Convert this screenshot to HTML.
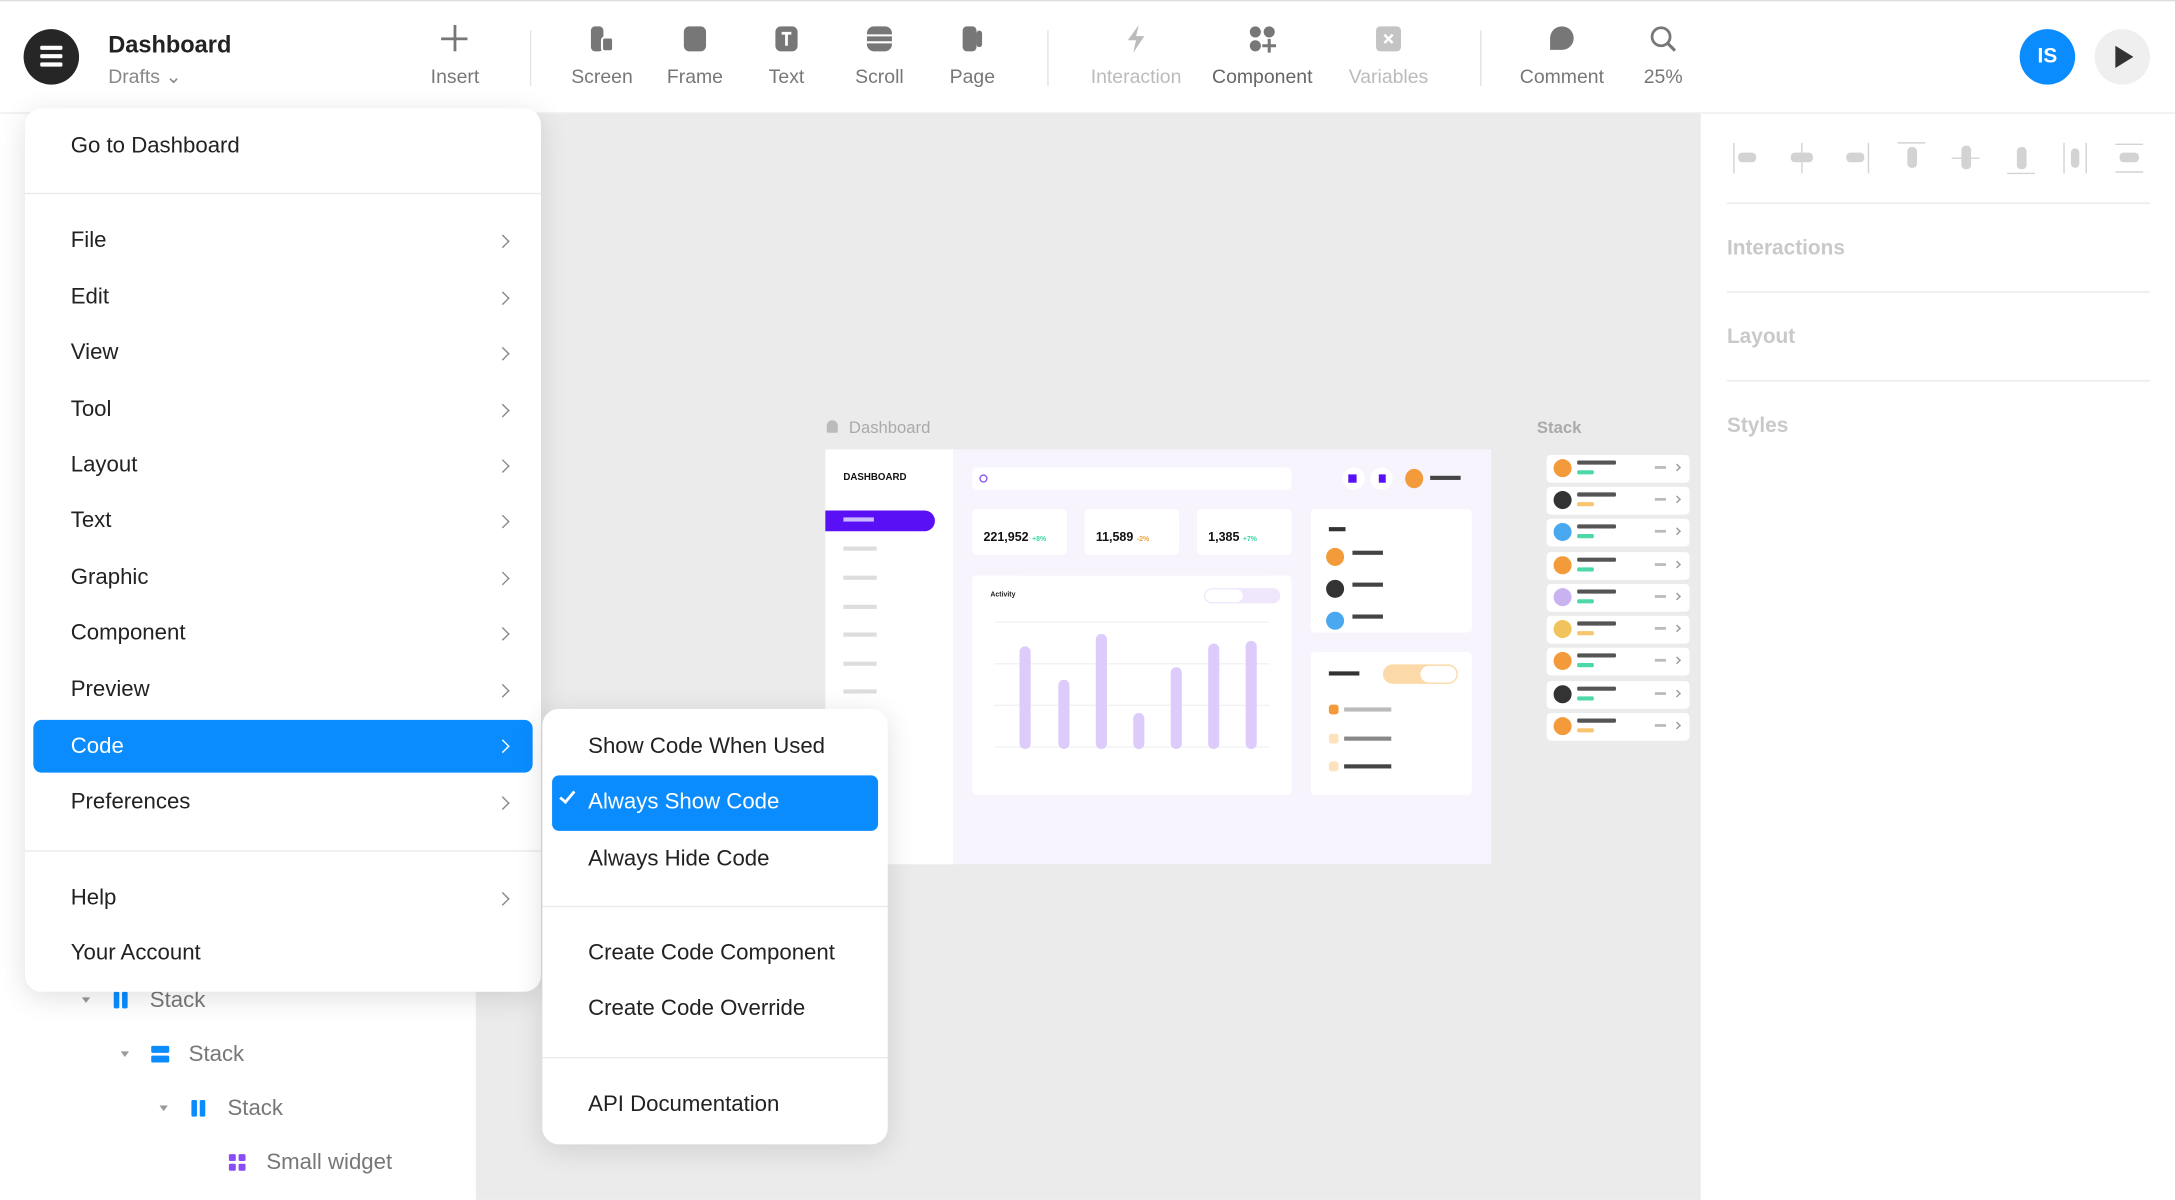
<!DOCTYPE html>
<html><head><meta charset="utf-8"><style>
*{box-sizing:border-box;margin:0;padding:0}
html,body{width:2175px;height:1200px;overflow:hidden;background:#fff;font-family:"Liberation Sans",sans-serif}
#r{position:absolute;left:0;top:0;width:1568px;height:865px;transform:scale(1.38712);transform-origin:0 0;background:#fff}
.a{position:absolute}
.tb{font-size:14px;color:#777;text-align:center;width:100px;margin-left:-50px;top:47px}
.ic{position:absolute;top:18px;width:20px;height:20px;margin-left:-10px}
.mi{position:absolute;left:51px;font-size:16px;color:#222;transform:translateY(-45%)}
.ch{position:absolute;left:359px;width:7px;height:7px;border-right:1.6px solid #888;border-top:1.6px solid #888;transform:translateY(-50%) rotate(45deg)}
.si{position:absolute;left:424px;font-size:16px;color:#222;transform:translateY(-45%)}
.sep{position:absolute;height:1px;background:#eaeaea}
.lt{position:absolute;font-size:16px;color:#777;transform:translateY(-45%)}
.tri{position:absolute;width:0;height:0;border-left:3.5px solid transparent;border-right:3.5px solid transparent;border-top:4px solid #999;transform:translateY(-50%)}
.card{position:absolute;background:#fff;border-radius:3px}
.bar{position:absolute;width:8px;background:#dccbfb;border-radius:4px}
.sc{position:absolute;left:1115px;width:103px;height:20px;background:#fff;border-radius:3px}
.sc i{position:absolute;left:5px;top:3px;width:13px;height:13px;border-radius:50%}
.sc b{position:absolute;left:22px;top:4px;width:28px;height:3px;background:#555;border-radius:1px}
.sc u{position:absolute;left:22px;top:11px;width:12px;height:3px;border-radius:1px}
.sc s{position:absolute;left:78px;top:8px;width:8px;height:2px;background:#bbb}
.sc em{position:absolute;left:92px;top:7px;width:4px;height:4px;border-right:1px solid #999;border-top:1px solid #999;transform:rotate(45deg)}
.rl{position:absolute;left:1245px;font-size:15px;font-weight:bold;color:#c9c9c9;transform:translateY(-45%)}
.al{position:absolute;top:100px;width:26px;height:28px;margin-left:-13px}
</style></head><body><div id="r">
<div class="a" style="left:343px;top:82px;width:882px;height:783px;background:#ebebeb"></div>
<div class="a" style="left:1225px;top:82px;width:343px;height:783px;background:#fff;border-left:1px solid #e6e6e6"></div>
<div class="a" style="left:0;top:0;width:1568px;height:1px;background:#ddd"></div>
<div class="a" style="left:0;top:81px;width:1568px;height:1px;background:#ececec"></div>
<div class="a" style="left:17px;top:21px;width:40px;height:40px;border-radius:50%;background:#262626"></div>
<div class="a" style="left:29px;top:33px;width:16px;height:2.5px;background:#fff;border-radius:1px;box-shadow:0 6px 0 #fff,0 12px 0 #fff"></div>
<div class="a" style="left:78px;top:23px;font-size:17px;font-weight:bold;color:#222">Dashboard</div>
<div class="a" style="left:78px;top:47px;font-size:14px;color:#888">Drafts ⌄</div>
<div class="a" style="left:318px;top:27px;width:19px;height:2px;background:#777"></div>
<div class="a" style="left:327px;top:18px;width:2px;height:19px;background:#777"></div>
<div class="a tb" style="left:328px">Insert</div>
<div class="a" style="left:382px;top:22px;width:1px;height:40px;background:#e3e3e3"></div>
<svg class="ic" style="left:434px" viewBox="0 0 20 20"><rect x="2" y="1" width="9" height="18" rx="3" fill="#777"/><rect x="10" y="9" width="8" height="10" rx="2" fill="#777" stroke="#fff" stroke-width="1.5"/></svg>
<div class="a tb" style="left:434px">Screen</div>
<svg class="ic" style="left:501px" viewBox="0 0 20 20"><rect x="2" y="1" width="16" height="18" rx="4" fill="#777"/></svg>
<div class="a tb" style="left:501px">Frame</div>
<svg class="ic" style="left:567px" viewBox="0 0 20 20"><rect x="2" y="1" width="16" height="18" rx="4" fill="#777"/><path d="M6.5 6h7M10 6v9" stroke="#fff" stroke-width="2"/></svg>
<div class="a tb" style="left:567px">Text</div>
<svg class="ic" style="left:634px" viewBox="0 0 20 20"><rect x="1" y="1" width="18" height="18" rx="5" fill="#777"/><path d="M1 7.5h18M1 12.5h18" stroke="#fff" stroke-width="1.5"/></svg>
<div class="a tb" style="left:634px">Scroll</div>
<svg class="ic" style="left:701px" viewBox="0 0 20 20"><rect x="3" y="1" width="10" height="18" rx="3" fill="#777"/><rect x="13" y="4" width="4" height="12" rx="2" fill="#777"/></svg>
<div class="a tb" style="left:701px">Page</div>
<div class="a" style="left:755px;top:22px;width:1px;height:40px;background:#e3e3e3"></div>
<svg class="ic" style="left:819px" viewBox="0 0 20 20"><path d="M12 0L4 11h6l-2 9 8-12h-6z" fill="#bbb"/></svg>
<div class="a tb" style="left:819px;color:#bbb">Interaction</div>
<svg class="ic" style="left:910px" viewBox="0 0 20 20"><circle cx="5" cy="5" r="4" fill="#777"/><circle cx="15" cy="5" r="4" fill="#777"/><circle cx="5" cy="15" r="4" fill="#777"/><path d="M15 10v10M10 15h10" stroke="#777" stroke-width="2.2"/></svg>
<div class="a tb" style="left:910px;color:#666">Component</div>
<svg class="ic" style="left:1001px" viewBox="0 0 20 20"><rect x="1" y="1" width="18" height="18" rx="3" fill="#c4c4c4"/><path d="M7 7l6 6M13 7l-6 6" stroke="#fff" stroke-width="1.8"/></svg>
<div class="a tb" style="left:1001px;color:#bbb">Variables</div>
<div class="a" style="left:1067px;top:22px;width:1px;height:40px;background:#e3e3e3"></div>
<svg class="ic" style="left:1126px" viewBox="0 0 20 20"><path d="M10 1a8.5 8.5 0 0 1 8.5 8.5v8.5h-8.5a8.5 8.5 0 1 1 0-17z" fill="#777" transform="scale(-1 1) translate(-20 0)"/></svg>
<div class="a tb" style="left:1126px">Comment</div>
<svg class="ic" style="left:1199px" viewBox="0 0 20 20"><circle cx="8.5" cy="8.5" r="6.5" fill="none" stroke="#777" stroke-width="2"/><path d="M13 13l5.5 5.5" stroke="#777" stroke-width="2.2"/></svg>
<div class="a tb" style="left:1199px">25%</div>
<div class="a" style="left:1456px;top:21px;width:40px;height:40px;border-radius:50%;background:#0a8cff;color:#fff;font-size:15px;font-weight:bold;text-align:center;line-height:40px">IS</div>
<div class="a" style="left:1510px;top:21px;width:40px;height:40px;border-radius:50%;background:#efefef"></div>
<div class="a" style="left:1525px;top:33px;width:0;height:0;border-top:8px solid transparent;border-bottom:8px solid transparent;border-left:13px solid #333"></div>
<!-- align icons -->
<svg class="al" style="left:1260px" viewBox="0 0 26 28"><path d="M3 3v22" stroke="#d3d3d3"/><rect x="6" y="10" width="13" height="7" rx="3" fill="#d3d3d3"/></svg>
<svg class="al" style="left:1299px" viewBox="0 0 26 28"><path d="M13 3v22" stroke="#d3d3d3"/><rect x="5" y="10" width="16" height="7" rx="3" fill="#d3d3d3"/></svg>
<svg class="al" style="left:1337px" viewBox="0 0 26 28"><path d="M23 3v22" stroke="#d3d3d3"/><rect x="7" y="10" width="13" height="7" rx="3" fill="#d3d3d3"/></svg>
<svg class="al" style="left:1378px" viewBox="0 0 26 28"><path d="M3 3h20" stroke="#d3d3d3"/><rect x="10" y="6" width="7" height="15" rx="3" fill="#d3d3d3"/></svg>
<svg class="al" style="left:1417px" viewBox="0 0 26 28"><path d="M3 14h20" stroke="#d3d3d3"/><rect x="10" y="5" width="7" height="17" rx="3" fill="#d3d3d3"/></svg>
<svg class="al" style="left:1457px" viewBox="0 0 26 28"><path d="M3 25h20" stroke="#d3d3d3"/><rect x="10" y="6" width="7" height="16" rx="3" fill="#d3d3d3"/></svg>
<svg class="al" style="left:1496px" viewBox="0 0 26 28"><path d="M5 3v22M21 3v22" stroke="#d3d3d3"/><rect x="10" y="7" width="6" height="14" rx="3" fill="#d3d3d3"/></svg>
<svg class="al" style="left:1535px" viewBox="0 0 26 28"><path d="M3 4h20M3 24h20" stroke="#d3d3d3"/><rect x="6" y="10" width="14" height="7" rx="3" fill="#d3d3d3"/></svg>
<div class="sep" style="left:1245px;top:146px;width:305px"></div>
<div class="rl" style="top:178px">Interactions</div>
<div class="sep" style="left:1245px;top:210px;width:305px"></div>
<div class="rl" style="top:242px">Layout</div>
<div class="sep" style="left:1245px;top:274px;width:305px"></div>
<div class="rl" style="top:306px">Styles</div>
<div class="a" style="left:596px;top:303px;width:8px;height:9px;background:#bbb;border-radius:4px 4px 1px 1px"></div>
<div class="a" style="left:612px;top:301px;font-size:12px;color:#aaa">Dashboard</div>
<div class="a" style="left:1108px;top:301px;font-size:12px;color:#aaa;font-weight:bold">Stack</div>
<div class="a" style="left:595px;top:324px;width:480px;height:299px;background:#f8f4fe"></div>
<div class="a" style="left:595px;top:324px;width:92px;height:299px;background:#fff"></div>
<div class="a" style="left:608px;top:341px;font-size:7px;font-weight:bold;color:#111">DASHBOARD</div>
<div class="a" style="left:595px;top:368px;width:79px;height:15px;background:#5a10f5;border-radius:0 8px 8px 0"></div>
<div class="a" style="left:608px;top:373px;width:22px;height:3px;background:#cbb9ff"></div>
<div class="a" style="left:608px;top:394px;width:24px;height:3px;background:#ddd;box-shadow:0 21px 0 #ddd,0 42px 0 #ddd,0 62px 0 #ddd,0 83px 0 #ddd,0 103px 0 #ddd"></div>
<div class="card" style="left:701px;top:337px;width:230px;height:16px"></div>
<div class="a" style="left:706px;top:342px;width:6px;height:6px;border:1.2px solid #8a5cf6;border-radius:50%"></div>
<div class="a" style="left:968px;top:337px;width:16px;height:16px;border-radius:50%;background:#fff"></div>
<div class="a" style="left:972px;top:342px;width:6px;height:6px;background:#5a10f5"></div>
<div class="a" style="left:988px;top:337px;width:16px;height:16px;border-radius:50%;background:#fff"></div>
<div class="a" style="left:994px;top:342px;width:5px;height:6px;background:#5a10f5"></div>
<div class="a" style="left:1013px;top:338px;width:13px;height:14px;border-radius:50%;background:#f39a3a"></div>
<div class="a" style="left:1031px;top:343px;width:22px;height:3px;background:#444"></div>
<div class="card" style="left:701px;top:367px;width:68px;height:33px"></div>
<div class="card" style="left:782px;top:367px;width:68px;height:33px"></div>
<div class="card" style="left:863px;top:367px;width:68px;height:33px"></div>
<div class="a" style="left:709px;top:382px;font-size:9px;font-weight:bold;color:#111">221,952 <span style="color:#3dd6a4;font-size:5px">+8%</span></div>
<div class="a" style="left:790px;top:382px;font-size:9px;font-weight:bold;color:#111">11,589 <span style="color:#f3a13a;font-size:5px">-2%</span></div>
<div class="a" style="left:871px;top:382px;font-size:9px;font-weight:bold;color:#111">1,385 <span style="color:#3dd6a4;font-size:5px">+7%</span></div>
<div class="card" style="left:701px;top:415px;width:230px;height:158px"></div>
<div class="a" style="left:714px;top:426px;font-size:5px;font-weight:bold;color:#222">Activity</div>
<div class="a" style="left:868px;top:424px;width:55px;height:11px;border-radius:6px;background:#efe8fd"></div>
<div class="a" style="left:869px;top:425px;width:27px;height:9px;border-radius:5px;background:#fff"></div>
<div class="a" style="left:717px;top:448px;width:198px;height:1px;background:#f2f2f2;box-shadow:0 30px 0 #f2f2f2,0 60px 0 #f2f2f2,0 90px 0 #f2f2f2"></div>
<div class="bar" style="left:735px;top:466px;height:74px"></div>
<div class="bar" style="left:763px;top:490px;height:50px"></div>
<div class="bar" style="left:790px;top:457px;height:83px"></div>
<div class="bar" style="left:817px;top:514px;height:26px"></div>
<div class="bar" style="left:844px;top:481px;height:59px"></div>
<div class="bar" style="left:871px;top:464px;height:76px"></div>
<div class="bar" style="left:898px;top:462px;height:78px"></div>
<div class="card" style="left:945px;top:367px;width:116px;height:89px"></div>
<div class="a" style="left:958px;top:380px;width:12px;height:3px;background:#333"></div>
<div class="a" style="left:956px;top:395px;width:13px;height:13px;border-radius:50%;background:#f39a3a;box-shadow:0 23px 0 #333,0 46px 0 #4aa8f0"></div>
<div class="a" style="left:975px;top:397px;width:22px;height:3px;background:#444;box-shadow:0 23px 0 #444,0 46px 0 #444"></div>
<div class="card" style="left:945px;top:470px;width:116px;height:103px"></div>
<div class="a" style="left:958px;top:484px;width:22px;height:3px;background:#333"></div>
<div class="a" style="left:997px;top:479px;width:54px;height:14px;border-radius:7px;background:#fcd9a8"></div>
<div class="a" style="left:1024px;top:480px;width:26px;height:12px;border-radius:6px;background:#fff"></div>
<div class="a" style="left:958px;top:508px;width:7px;height:7px;border-radius:2px;background:#f39a3a;box-shadow:0 21px 0 #fde2bd,0 41px 0 #fde2bd"></div>
<div class="a" style="left:969px;top:510px;width:34px;height:3px;background:#bbb;box-shadow:0 21px 0 #888,0 41px 0 #444"></div>
<div class="sc" style="top:328px"><i style="background:#f39a3a"></i><b></b><u style="background:#4cd9a6"></u><s></s><em></em></div>
<div class="sc" style="top:351px"><i style="background:#333"></i><b></b><u style="background:#f7c56e"></u><s></s><em></em></div>
<div class="sc" style="top:374px"><i style="background:#4aa8f0"></i><b></b><u style="background:#4cd9a6"></u><s></s><em></em></div>
<div class="sc" style="top:398px"><i style="background:#f39a3a"></i><b></b><u style="background:#4cd9a6"></u><s></s><em></em></div>
<div class="sc" style="top:421px"><i style="background:#c9b2f0"></i><b></b><u style="background:#4cd9a6"></u><s></s><em></em></div>
<div class="sc" style="top:444px"><i style="background:#f0c35c"></i><b></b><u style="background:#f7c56e"></u><s></s><em></em></div>
<div class="sc" style="top:467px"><i style="background:#f39a3a"></i><b></b><u style="background:#4cd9a6"></u><s></s><em></em></div>
<div class="sc" style="top:491px"><i style="background:#333"></i><b></b><u style="background:#4cd9a6"></u><s></s><em></em></div>
<div class="sc" style="top:514px"><i style="background:#f39a3a"></i><b></b><u style="background:#f7c56e"></u><s></s><em></em></div>
<div class="tri" style="left:59px;top:721px"></div>
<div class="a" style="left:82px;top:715px;width:4px;height:12px;background:#0a8cff;border-radius:1px;box-shadow:6px 0 0 #0a8cff"></div>
<div class="lt" style="left:108px;top:721px">Stack</div>
<div class="tri" style="left:87px;top:760px"></div>
<div class="a" style="left:109px;top:754px;width:13px;height:5px;background:#0a8cff;border-radius:1px;box-shadow:0 7px 0 #0a8cff"></div>
<div class="lt" style="left:136px;top:760px">Stack</div>
<div class="tri" style="left:115px;top:799px"></div>
<div class="a" style="left:138px;top:793px;width:4px;height:12px;background:#0a8cff;border-radius:1px;box-shadow:6px 0 0 #0a8cff"></div>
<div class="lt" style="left:164px;top:799px">Stack</div>
<div class="a" style="left:165px;top:832px;width:5px;height:5px;background:#8a4cf6;border-radius:1px;box-shadow:7px 0 0 #8a4cf6,0 7px 0 #8a4cf6,7px 7px 0 #8a4cf6"></div>
<div class="lt" style="left:192px;top:838px">Small widget</div>
<div class="a" style="left:18px;top:78px;width:372px;height:637px;background:#fff;border-radius:12px;box-shadow:0 4px 20px rgba(0,0,0,.12)"></div>
<div class="mi" style="top:105px">Go to Dashboard</div>
<div class="sep" style="left:18px;top:139px;width:372px"></div>
<div class="mi" style="top:173px">File</div><div class="ch" style="top:174px"></div>
<div class="mi" style="top:214px">Edit</div><div class="ch" style="top:215px"></div>
<div class="mi" style="top:254px">View</div><div class="ch" style="top:255px"></div>
<div class="mi" style="top:295px">Tool</div><div class="ch" style="top:296px"></div>
<div class="mi" style="top:335px">Layout</div><div class="ch" style="top:336px"></div>
<div class="mi" style="top:375px">Text</div><div class="ch" style="top:376px"></div>
<div class="mi" style="top:416px">Graphic</div><div class="ch" style="top:417px"></div>
<div class="mi" style="top:456px">Component</div><div class="ch" style="top:457px"></div>
<div class="mi" style="top:497px">Preview</div><div class="ch" style="top:498px"></div>
<div class="a" style="left:24px;top:519px;width:360px;height:38px;background:#0a8cff;border-radius:6px"></div>
<div class="mi" style="top:538px;color:#fff">Code</div><div class="ch" style="top:538px;border-color:#fff"></div>
<div class="mi" style="top:578px">Preferences</div><div class="ch" style="top:579px"></div>
<div class="sep" style="left:18px;top:613px;width:372px"></div>
<div class="mi" style="top:647px">Help</div><div class="ch" style="top:648px"></div>
<div class="mi" style="top:687px">Your Account</div>
<div class="a" style="left:391px;top:511px;width:249px;height:314px;background:#fff;border-radius:12px;box-shadow:0 4px 20px rgba(0,0,0,.12)"></div>
<div class="si" style="top:538px">Show Code When Used</div>
<div class="a" style="left:398px;top:559px;width:235px;height:40px;background:#0a8cff;border-radius:5px"></div>
<div class="a" style="left:406px;top:568px;width:6px;height:11px;border-right:2px solid #fff;border-bottom:2px solid #fff;transform:rotate(40deg)"></div>
<div class="si" style="top:578px;color:#fff">Always Show Code</div>
<div class="si" style="top:619px">Always Hide Code</div>
<div class="sep" style="left:391px;top:653px;width:249px"></div>
<div class="si" style="top:687px">Create Code Component</div>
<div class="si" style="top:727px">Create Code Override</div>
<div class="sep" style="left:391px;top:762px;width:249px"></div>
<div class="si" style="top:796px">API Documentation</div>
</div></body></html>
